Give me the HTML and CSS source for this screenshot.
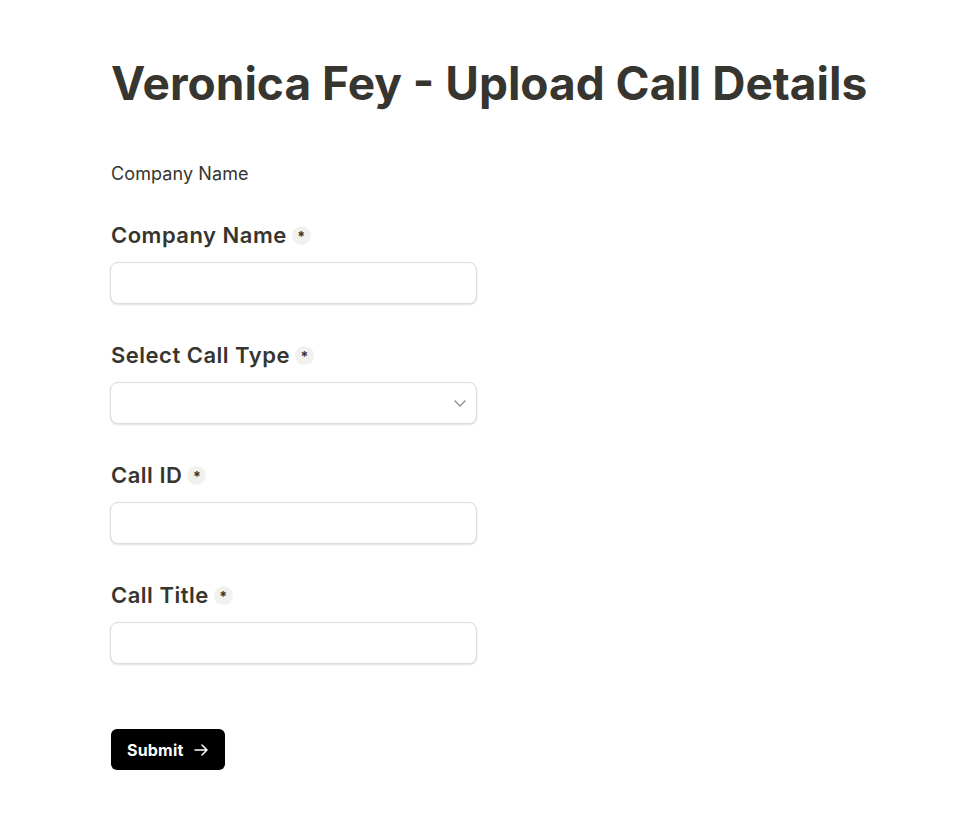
FILE: index.html
```html
<!DOCTYPE html>
<html>
<head>
<meta charset="utf-8">
<link rel="stylesheet" href="styles.css">
</head>
<body>
<main class="page">
  <h1 class="title">Veronica Fey - Upload Call Details</h1>
  <p class="section">Company Name</p>
  <form class="form">
    <div class="field">
      <label class="label">Company Name <span class="req">*</span></label>
      <input class="input" type="text">
    </div>
    <div class="field">
      <label class="label">Select Call Type <span class="req">*</span></label>
      <div class="select">
        <svg class="chev" width="14" height="14" viewBox="0 0 14 14"><path d="M2 5 L7 10 L12 5" fill="none" stroke="#8a8a8a" stroke-width="1.3" stroke-linecap="round" stroke-linejoin="round"/></svg>
      </div>
    </div>
    <div class="field">
      <label class="label">Call ID <span class="req">*</span></label>
      <input class="input" type="text">
    </div>
    <div class="field">
      <label class="label">Call Title <span class="req">*</span></label>
      <input class="input" type="text">
    </div>
    <div class="actions">
      <button class="submit" type="button">Submit
        <svg width="14" height="14" viewBox="0 0 14 14"><path d="M1 7 H13 M8 2 L13 7 L8 12" fill="none" stroke="#fff" stroke-width="1.5" stroke-linecap="round" stroke-linejoin="round"/></svg>
      </button>
    </div>
  </form>
</main>
</body>
</html>
```
FILE: styles.css
```css
* { box-sizing: border-box; }
body {
  margin: 0;
  background: #fff;
  font-family: Inter, "Noto Sans", sans-serif;
  color: #37352f;
}
.page {
  padding: 51px 0 0 111px;
}
.title {
  margin: 0;
  font-size: 46px;
  font-weight: 700;
  line-height: 64px;
}
.section {
  margin: 47px 0 0;
  font-size: 18px;
  line-height: 24px;
  letter-spacing: 0.1px;
}
.form {
  margin-top: 36px;
  display: flex;
  flex-direction: column;
  gap: 38px;
}
.field {
  display: flex;
  flex-direction: column;
  gap: 14px;
  width: 367px;
  margin-left: -1px;
}
.label {
  display: flex;
  align-items: center;
  gap: 5px;
  font-size: 22px;
  font-weight: 600;
  line-height: 26px;
  letter-spacing: 0.5px;
  margin-left: 1px;
}
.req {
  display: inline-flex;
  align-items: center;
  justify-content: center;
  width: 19px;
  height: 19px;
  border-radius: 50%;
  background: #f1f1ef;
  font-size: 14px;
  font-weight: 700;
  line-height: 1;
  letter-spacing: 0;
  padding-top: 4px;
}
.input, .select {
  display: block;
  width: 367px;
  height: 42px;
  border: 1px solid #dcdcdc;
  border-radius: 8px;
  background: #fff;
  box-shadow: 0 1px 2px rgba(0,0,0,0.12);
  outline: none;
  font: inherit;
}
.select {
  display: flex;
  align-items: center;
  justify-content: flex-end;
  padding-right: 9px;
}
.actions {
  margin-top: 27px;
}
.submit {
  display: inline-flex;
  align-items: center;
  gap: 10px;
  height: 41px;
  padding: 0 17px 0 16px;
  border: none;
  border-radius: 6px;
  background: #000;
  color: #fff;
  font-family: Inter, sans-serif;
  font-size: 16px;
  font-weight: 700;
  letter-spacing: 0.2px;
}
```
